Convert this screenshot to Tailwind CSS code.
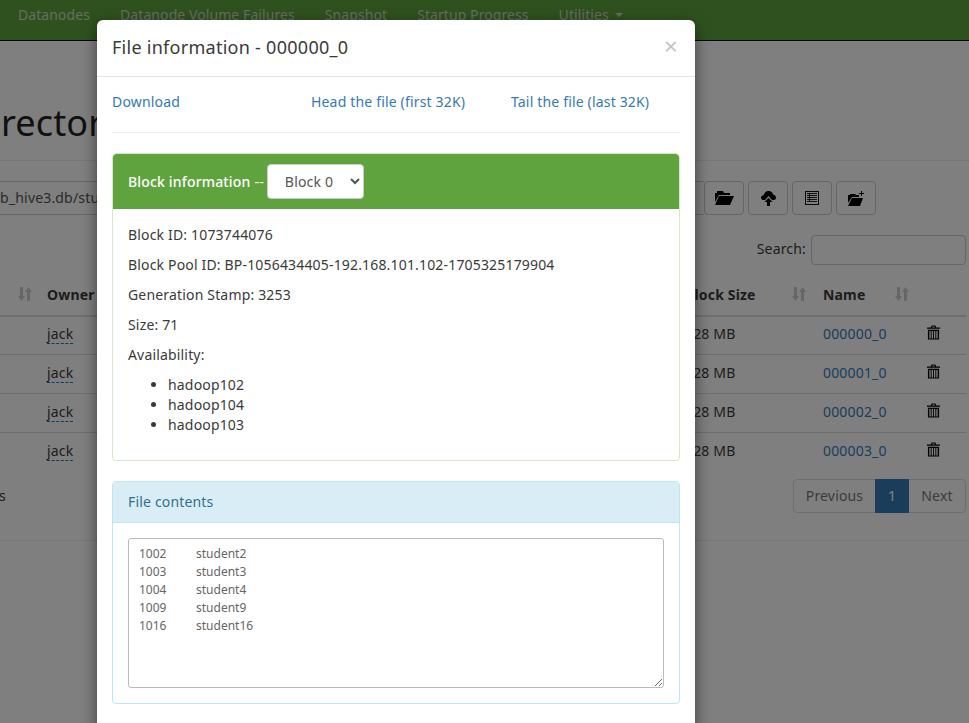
<!DOCTYPE html>
<html lang="en">
<head>
  <meta charset="UTF-8">
  <title>Browsing HDFS</title>
  <script src="https://cdn.jsdelivr.net/npm/@tailwindcss/browser@4"></script>
</head>
<body class="relative w-[969px] h-[723px] overflow-hidden bg-white text-[14px] leading-[20px] tracking-[0.17px] text-[#3a3a3a] font-['Noto_Sans',sans-serif]">
  <!-- page behind the modal -->
  <nav class="flex h-[41px] pl-[3px] pb-[11px] items-center bg-[#5fa33e] border-b border-black tracking-[0.08px] text-[#c8dcbb]">
    <a class="px-[15px]">Datanodes</a>
    <a class="px-[15px]">Datanode Volume Failures</a>
    <a class="px-[15px]">Snapshot</a>
    <a class="px-[15px]">Startup Progress</a>
    <a class="px-[15px] flex items-center gap-[6px]">Utilities <span class="w-0 h-0 border-x-[4px] border-t-[4px] border-x-transparent border-t-[#c8dcbb]"></span></a>
  </nav>
  <div class="h-[120px] flex items-end pb-[17px] border-b border-[#eee]">
    <h1 class="-ml-[170px] text-[36px] leading-[40px] whitespace-nowrap text-[#222]">Browse Directory</h1>
  </div>
  <div class="mt-[20px] h-[34px] flex justify-between pr-[93px]">
    <div class="flex-1 border-y border-[#ccc] overflow-hidden whitespace-nowrap leading-[32px] text-[#555]"><span class="-ml-[162px] inline-block">/user/hive/warehouse/db_hive3.db/student</span></div>
    <div class="flex gap-[4px]">
      <button class="w-[40px] h-[34px] border border-[#ccc] rounded flex items-center justify-center">
        <svg class="w-[19px] h-[14px]" viewBox="0 0 19 14"><path fill="#000" d="M0 2h2V0h6l1 2h6v2H4L0 11zM4 5h15l-4 9H0z"/></svg>
      </button>
      <button class="w-[40px] h-[34px] border border-[#ccc] rounded flex items-center justify-center">
        <svg class="w-[15px] h-[15px]" viewBox="0 0 15 15"><path fill="#000" d="M7.500 0C10 0 11.500 1.500 12 3.500c2 .3 3 1.700 3 3.300C15 8 14 9 13 9h-2L7.500 5 4 9H2C1 9 0 8 0 6.800 0 5.500 1 4.500 2.500 4.300 3 2 5 0 7.500 0zM7.500 7l4 4H9v4H6v-4H3.500z"/></svg>
      </button>
      <button class="w-[40px] h-[34px] border border-[#ccc] rounded flex items-center justify-center">
        <svg class="w-[14px] h-[14px]" viewBox="0 0 14 14"><path fill="#111" fill-rule="evenodd" d="M0 0h14v14H0zM1 1v12h12V1z"/><path fill="#222" d="M2 2h10v1H2zM2 4h10v1H2zM2 6h10v1H2zM2 8h10v1H2zM2 10h10v1H2zM4 2h1v9H4z"/></svg>
      </button>
      <button class="w-[40px] h-[34px] border border-[#ccc] rounded flex items-center justify-center">
        <svg class="w-[17px] h-[15px]" viewBox="0 0 17 15"><path fill="#000" d="M0 4h2V3h5l1 1h3v2H4L0 12zM4 7h11l-3 8H0z"/><path fill="#000" d="M13 0h1v2h2v1h-2v2h-1V3h-2V2h2z"/></svg>
      </button>
    </div>
  </div>
  <div class="mt-[20px] h-[30px] pr-[3px] flex justify-end items-center gap-[5px]">
    <label class="pb-[2px]">Search:</label>
    <input class="w-[155px] h-[30px] border border-[#ccc] rounded" type="text">
  </div>
  <table class="mt-[10px] w-[966px] table-fixed border-collapse">
    <colgroup><col class="w-[39px]"><col class="w-[628px]"><col class="w-[148px]"><col class="w-[102px]"><col class="w-[49px]"></colgroup>
    <thead>
      <tr class="h-[41px] border-b-2 border-[#ddd] font-bold text-left">
        <th class="relative"><svg class="absolute right-[7px] top-[12px] w-[14px] h-[14px]" viewBox="0 0 14 14"><path fill="#ccc" d="M2 0h3v9h2l-3.500 5L0 9h2zM9 14h3V5h2L10.500 0 7 5h2z"/></svg></th>
        <th class="px-2">Owner</th>
        <th class="relative pl-[18px]">Block Size<svg class="absolute right-[9px] top-[12px] w-[14px] h-[14px]" viewBox="0 0 14 14"><path fill="#ccc" d="M2 0h3v9h2l-3.500 5L0 9h2zM9 14h3V5h2L10.500 0 7 5h2z"/></svg></th>
        <th class="relative px-2">Name<svg class="absolute right-[8px] top-[12px] w-[14px] h-[14px]" viewBox="0 0 14 14"><path fill="#ccc" d="M2 0h3v9h2l-3.500 5L0 9h2zM9 14h3V5h2L10.500 0 7 5h2z"/></svg></th>
        <th></th>
      </tr>
    </thead>
    <tbody>
      <tr class="h-[38px]"><td></td><td class="px-2 pb-[2px]"><span class="border-b border-dashed border-[#1b7bb8]">jack</span></td><td class="pl-[18px] pb-[2px]">128 MB</td><td class="px-2 pb-[2px] text-[#337ab7]">000000_0</td><td class="pl-[10px] pb-[5px]"><svg class="w-[13px] h-[15px]" viewBox="0 0 14 15"><path fill="#000" fill-rule="evenodd" d="M5 0h4l1 2h4v1.500H0V2h4zM6 1 5.500 2h3L8 1zM1 4.500h12V15H1zM2.500 6v8H4V6zM5 6v8h1.500V6zM7.500 6v8H9V6zM10 6v8h1.500V6z"/></svg></td></tr>
      <tr class="h-[39px] border-t border-[#ddd]"><td></td><td class="px-2 pb-[2px]"><span class="border-b border-dashed border-[#1b7bb8]">jack</span></td><td class="pl-[18px] pb-[2px]">128 MB</td><td class="px-2 pb-[2px] text-[#337ab7]">000001_0</td><td class="pl-[10px] pb-[5px]"><svg class="w-[13px] h-[15px]" viewBox="0 0 14 15"><path fill="#000" fill-rule="evenodd" d="M5 0h4l1 2h4v1.500H0V2h4zM6 1 5.500 2h3L8 1zM1 4.500h12V15H1zM2.500 6v8H4V6zM5 6v8h1.500V6zM7.500 6v8H9V6zM10 6v8h1.500V6z"/></svg></td></tr>
      <tr class="h-[39px] border-t border-[#ddd]"><td></td><td class="px-2 pb-[2px]"><span class="border-b border-dashed border-[#1b7bb8]">jack</span></td><td class="pl-[18px] pb-[2px]">128 MB</td><td class="px-2 pb-[2px] text-[#337ab7]">000002_0</td><td class="pl-[10px] pb-[5px]"><svg class="w-[13px] h-[15px]" viewBox="0 0 14 15"><path fill="#000" fill-rule="evenodd" d="M5 0h4l1 2h4v1.500H0V2h4zM6 1 5.500 2h3L8 1zM1 4.500h12V15H1zM2.500 6v8H4V6zM5 6v8h1.500V6zM7.500 6v8H9V6zM10 6v8h1.500V6z"/></svg></td></tr>
      <tr class="h-[39px] border-t border-[#ddd]"><td></td><td class="px-2 pb-[2px]"><span class="border-b border-dashed border-[#1b7bb8]">jack</span></td><td class="pl-[18px] pb-[2px]">128 MB</td><td class="px-2 pb-[2px] text-[#337ab7]">000003_0</td><td class="pl-[10px] pb-[5px]"><svg class="w-[13px] h-[15px]" viewBox="0 0 14 15"><path fill="#000" fill-rule="evenodd" d="M5 0h4l1 2h4v1.500H0V2h4zM6 1 5.500 2h3L8 1zM1 4.500h12V15H1zM2.500 6v8H4V6zM5 6v8h1.500V6zM7.500 6v8H9V6zM10 6v8h1.500V6z"/></svg></td></tr>
    </tbody>
  </table>
  <div class="mt-[8px] h-[34px] w-[966px] flex justify-between items-center">
    <span class="-ml-[2px] w-[8px] overflow-hidden flex justify-end">s</span>
    <div class="flex h-[34px] border border-[#ddd] rounded">
      <a class="w-[81px] flex items-center justify-center text-[#777]">Previous</a>
      <a class="w-[34px] -my-px flex items-center justify-center bg-[#337ab7] text-white">1</a>
      <a class="w-[56px] flex items-center justify-center text-[#777]">Next</a>
    </div>
  </div>
  <hr class="mt-[27px] border-[#eee]">

  <!-- backdrop -->
  <div class="absolute inset-0 bg-black/50"></div>

  <!-- modal -->
  <div class="absolute left-[97px] top-[20px] w-[598px] bg-white rounded-[6px] shadow-[0_5px_15px_rgba(0,0,0,0.5)]">
    <div class="h-[57px] px-[15px] pb-[2px] flex items-center justify-between border-b border-[#e5e5e5]">
      <h4 class="text-[18px] tracking-[0.27px]">File information - 000000_0</h4>
      <span class="mr-[2px] text-[24px] text-[#c4c4c4] -mt-[3px]">×</span>
    </div>
    <div class="p-[15px] pb-[30px]">
      <div class="flex h-[20px] text-[#337ab7]">
        <a class="w-[199px]">Download</a>
        <a class="w-[200px]">Head the file (first 32K)</a>
        <a>Tail the file (last 32K)</a>
      </div>
      <hr class="mt-[20px] mb-[20px] border-[#eee]">
      <div class="border border-[#d6e9c6] rounded mb-[20px]">
        <div class="h-[55px] px-[15px] flex items-center bg-[#5fa33e] rounded-t text-white">
          <span class="font-medium">Block information</span><span class="ml-[4px] mr-[3px]">--</span>
          <select class="w-[97px] h-[35px] pl-[13px] bg-white border border-[#ccc] rounded text-[#555]"><option>Block 0</option></select>
        </div>
        <div class="px-[15px] pt-[16px] pb-[15px]">
          <p class="mb-[10px]">Block ID: 1073744076</p>
          <p class="mb-[10px]">Block Pool ID: BP-1056434405-192.168.101.102-1705325179904</p>
          <p class="mb-[10px]">Generation Stamp: 3253</p>
          <p class="mb-[10px]">Size: 71</p>
          <p class="mb-[10px]">Availability:</p>
          <ul class="list-disc pl-[40px] mb-[10px]">
            <li>hadoop102</li>
            <li>hadoop104</li>
            <li>hadoop103</li>
          </ul>
        </div>
      </div>
      <div class="border border-[#bce8f1] rounded">
        <div class="h-[41px] px-[15px] flex items-center bg-[#d9edf7] border-b border-[#bce8f1] text-[#31708f] rounded-t">File contents</div>
        <div class="p-[15px]">
          <textarea class="block w-[536px] h-[150px] px-[10px] py-[6px] border border-[#bbb] rounded-[3px] text-[12px] leading-[18px] tracking-normal text-[#666] [tab-size:57px]" readonly>1002	student2
1003	student3
1004	student4
1009	student9
1016	student16</textarea>
        </div>
      </div>
    </div>
  </div>
</body>
</html>
